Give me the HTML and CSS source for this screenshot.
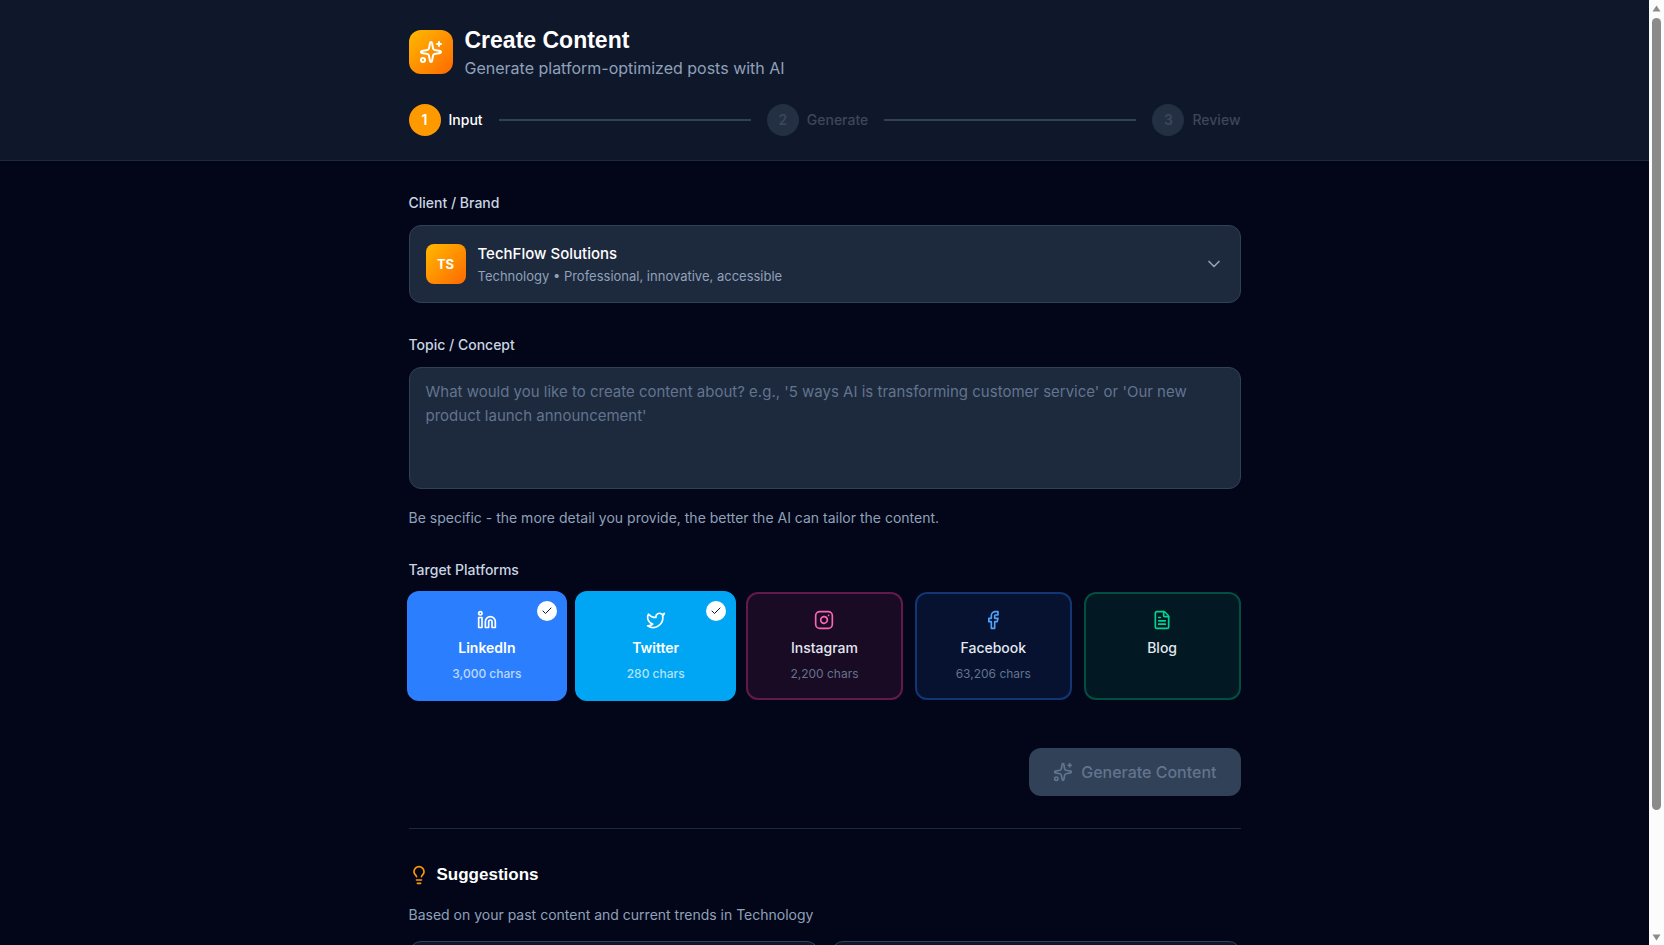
FILE: index.html
```
<!DOCTYPE html>
<html lang="en">
<head>
<meta charset="utf-8">
<meta name="viewport" content="width=device-width, initial-scale=1">
<title>Create Content</title>
<link rel="stylesheet" href="styles.css">
</head>

<body>
<div class="page">

<header class="header">
<div class="container">
	<div class="title-row">
		<div class="logo">
			<svg class="icon icon-lg" viewBox="0 0 24 24"><path d="M11.017 2.814a1 1 0 0 1 1.966 0l1.051 5.558a2 2 0 0 0 1.594 1.594l5.558 1.051a1 1 0 0 1 0 1.966l-5.558 1.051a2 2 0 0 0-1.594 1.594l-1.051 5.558a1 1 0 0 1-1.966 0l-1.051-5.558a2 2 0 0 0-1.594-1.594l-5.558-1.051a1 1 0 0 1 0-1.966l5.558-1.051a2 2 0 0 0 1.594-1.594z"/><path d="M20 2v4"/><path d="M22 4h-4"/><circle cx="4" cy="20" r="2"/></svg>
		</div>
		<div>
			<h1>Create Content</h1>
			<p class="subtitle">Generate platform-optimized posts with AI</p>
		</div>
	</div>
	<ol class="steps">
		<li class="step active"><span class="step-num">1</span><span>Input</span></li>
		<li class="step-line" aria-hidden="true"></li>
		<li class="step"><span class="step-num">2</span><span>Generate</span></li>
		<li class="step-line" aria-hidden="true"></li>
		<li class="step"><span class="step-num">3</span><span>Review</span></li>
	</ol>
</div>
</header>

<main class="container main">
<form>
	<div class="field">
		<label class="label" for="client">Client / Brand</label>
		<button type="button" class="client" id="client" aria-haspopup="listbox">
			<span class="avatar">TS</span>
			<span class="client-text">
				<span class="client-name">TechFlow Solutions</span>
				<span class="client-meta">Technology &bull; Professional, innovative, accessible</span>
			</span>
			<svg class="icon" viewBox="0 0 24 24"><path d="m6 9 6 6 6-6"/></svg>
		</button>
	</div>

	<div class="field">
		<label class="label" for="topic">Topic / Concept</label>
		<textarea class="topic" id="topic" placeholder="What would you like to create content about? e.g., '5 ways AI is transforming customer service' or 'Our new product launch announcement'"></textarea>
		<p class="hint">Be specific - the more detail you provide, the better the AI can tailor the content.</p>
	</div>

	<div class="field" role="group" aria-labelledby="platforms-label">
		<div class="label" id="platforms-label">Target Platforms</div>
		<div class="platforms">
			<button type="button" class="platform linkedin selected" aria-pressed="true">
				<span class="badge"><svg class="icon icon-xs" viewBox="0 0 24 24"><path d="M20 6 9 17l-5-5"/></svg></span>
				<svg class="icon" viewBox="0 0 24 24"><path d="M16 8a6 6 0 0 1 6 6v7h-4v-7a2 2 0 0 0-2-2 2 2 0 0 0-2 2v7h-4v-7a6 6 0 0 1 6-6z"/><rect width="4" height="12" x="2" y="9"/><circle cx="4" cy="4" r="2"/></svg>
				<span class="name">LinkedIn</span>
				<span class="chars">3,000 chars</span>
			</button>
			<button type="button" class="platform twitter selected" aria-pressed="true">
				<span class="badge"><svg class="icon icon-xs" viewBox="0 0 24 24"><path d="M20 6 9 17l-5-5"/></svg></span>
				<svg class="icon" viewBox="0 0 24 24"><path d="M22 4s-.7 2.1-2 3.4c1.6 10-9.4 17.3-18 11.6 2.2.1 4.4-.6 6-2C3 15.5.5 9.6 3 5c2.2 2.6 5.6 4.1 9 4-.9-4.2 4-6.6 7-3.8 1.1 0 3-1.2 3-1.2z"/></svg>
				<span class="name">Twitter</span>
				<span class="chars">280 chars</span>
			</button>
			<button type="button" class="platform instagram" aria-pressed="false">
				<svg class="icon" viewBox="0 0 24 24"><rect width="20" height="20" x="2" y="2" rx="5" ry="5"/><path d="M16 11.37A4 4 0 1 1 12.63 8 4 4 0 0 1 16 11.37z"/><path d="M17.5 6.5h.01"/></svg>
				<span class="name">Instagram</span>
				<span class="chars">2,200 chars</span>
			</button>
			<button type="button" class="platform facebook" aria-pressed="false">
				<svg class="icon" viewBox="0 0 24 24"><path d="M18 2h-3a5 5 0 0 0-5 5v3H7v4h3v8h4v-8h3l1-4h-4V7a1 1 0 0 1 1-1h3z"/></svg>
				<span class="name">Facebook</span>
				<span class="chars">63,206 chars</span>
			</button>
			<button type="button" class="platform blog" aria-pressed="false">
				<svg class="icon" viewBox="0 0 24 24"><path d="M6 22a2 2 0 0 1-2-2V4a2 2 0 0 1 2-2h8a2.4 2.4 0 0 1 1.704.706l3.588 3.588A2.4 2.4 0 0 1 20 8v12a2 2 0 0 1-2 2z"/><path d="M14 2v5a1 1 0 0 0 1 1h5"/><path d="M10 9H8"/><path d="M16 13H8"/><path d="M16 17H8"/></svg>
				<span class="name">Blog</span>
			</button>
		</div>
	</div>

	<div class="actions">
		<button type="submit" class="generate" disabled>
			<svg class="icon" viewBox="0 0 24 24"><path d="M11.017 2.814a1 1 0 0 1 1.966 0l1.051 5.558a2 2 0 0 0 1.594 1.594l5.558 1.051a1 1 0 0 1 0 1.966l-5.558 1.051a2 2 0 0 0-1.594 1.594l-1.051 5.558a1 1 0 0 1-1.966 0l-1.051-5.558a2 2 0 0 0-1.594-1.594l-5.558-1.051a1 1 0 0 1 0-1.966l5.558-1.051a2 2 0 0 0 1.594-1.594z"/><path d="M20 2v4"/><path d="M22 4h-4"/><circle cx="4" cy="20" r="2"/></svg>
			Generate Content
		</button>
	</div>
</form>

<section class="suggestions">
	<div class="suggest-title">
		<svg class="icon" viewBox="0 0 24 24"><path d="M15 14c.2-1 .7-1.7 1.5-2.5 1-.9 1.5-2.2 1.5-3.5A6 6 0 0 0 6 8c0 1 .2 2.2 1.5 3.5.7.7 1.3 1.5 1.5 2.5"/><path d="M9 18h6"/><path d="M10 22h4"/></svg>
		<h2>Suggestions</h2>
	</div>
	<p class="suggest-sub">Based on your past content and current trends in Technology</p>
	<div class="suggest-grid">
		<div class="suggest-card"></div>
		<div class="suggest-card"></div>
	</div>
</section>
</main>
</div>

<div class="scrollbar" aria-hidden="true">
	<svg class="arrow" viewBox="0 0 9 7"><path d="M4.5 0.5 8.5 6.5h-8z"/></svg>
	<div class="track"><div class="thumb"></div></div>
	<svg class="arrow" viewBox="0 0 9 7"><path d="M4.5 6.5 8.5 0.5h-8z"/></svg>
</div>
</body>
</html>
```
FILE: styles.css
```
*
{
	box-sizing:border-box;
	margin:0;
	padding:0;
}
body
{
	display:flex;
	height:100vh;
	overflow:hidden;
	background:#020618;
	color:#fff;
	font-family:Inter, "Open Sans", sans-serif;
	font-size:16px;
	line-height:24px;
}
button, textarea
{
	font:inherit;
	color:inherit;
}
.page
{
	flex:1;
	min-width:0;
	overflow:hidden;
}
.container
{
	max-width:896px;
	margin:0 auto;
	padding:0 32px;
}
.icon
{
	width:20px;
	height:20px;
	flex:none;
	fill:none;
	stroke:currentColor;
	stroke-width:2;
	stroke-linecap:round;
	stroke-linejoin:round;
}
.icon-lg
{
	width:24px;
	height:24px;
}
.icon-xs
{
	width:12px;
	height:12px;
}

/* header */
.header
{
	padding:24px 0;
	background:#0f172b;
	border-bottom:1px solid #1d293d;
}
.title-row
{
	display:flex;
	align-items:center;
	gap:12px;
	margin-bottom:24px;
}
.logo
{
	display:flex;
	align-items:center;
	justify-content:center;
	width:44px;
	height:44px;
	border-radius:12px;
	background:linear-gradient(135deg, #ffb900, #ff6900);
}
h1, h2
{
	font-family:Arial, "Liberation Sans", sans-serif;
	font-weight:bold;
}
h1
{
	font-size:23px;
	line-height:32px;
}
.subtitle
{
	color:#90a1b9;
}
.steps
{
	display:flex;
	align-items:center;
	gap:16px;
	list-style:none;
}
.step
{
	display:flex;
	align-items:center;
	gap:8px;
	font-size:14px;
	line-height:20px;
	font-weight:500;
	color:#3b475b;
}
.step-num
{
	display:flex;
	align-items:center;
	justify-content:center;
	width:32px;
	height:32px;
	border-radius:50%;
	background:#232f43;
	font-weight:600;
}
.active
{
	color:#fff;
}
.active .step-num
{
	background:#fe9a00;
}
.step-line
{
	flex:1;
	height:2px;
	background:#314158;
}

/* form */
.main
{
	padding-top:32px;
}
.field
{
	margin-bottom:32px;
}
.label
{
	display:block;
	margin-bottom:12px;
	font-size:14px;
	line-height:20px;
	font-weight:500;
	color:#cad5e2;
}
.client
{
	display:flex;
	align-items:center;
	gap:12px;
	width:100%;
	padding:16px;
	border:1px solid #314158;
	border-radius:12px;
	background:#1d293d;
	color:#90a1b9;
	text-align:left;
}
.avatar
{
	display:flex;
	align-items:center;
	justify-content:center;
	width:40px;
	height:40px;
	border-radius:8px;
	background:linear-gradient(135deg, #ffb900, #ff6900);
	color:#fff;
	font-size:13px;
	font-weight:700;
}
.client-text
{
	display:flex;
	flex-direction:column;
	flex:1;
}
.client-name
{
	font-size:15px;
	font-weight:500;
	color:#fff;
}
.client-meta
{
	font-size:13px;
	line-height:20px;
}
.topic
{
	display:block;
	width:100%;
	height:122px;
	padding:12px 16px;
	border:1px solid #314158;
	border-radius:12px;
	background:#1d293d;
	font-size:15px;
	resize:none;
}
.topic::placeholder
{
	color:#62748e;
}
.hint
{
	margin-top:19px;
	font-size:14px;
	line-height:20px;
	color:#90a1b9;
}

/* platforms */
.platforms
{
	display:grid;
	grid-template-columns:repeat(5, 1fr);
	gap:12px;
}
.platform
{
	position:relative;
	display:flex;
	flex-direction:column;
	align-items:center;
	gap:8px;
	padding:16px;
	border:2px solid;
	border-radius:12px;
}
.name
{
	font-size:14px;
	line-height:20px;
	font-weight:500;
	color:#e2e8f0;
}
.chars
{
	font-size:12px;
	line-height:16px;
	color:#62748e;
}
.selected
{
	margin:-1px -2px;
	padding:17px 16px;
	color:#fff;
}
.selected .name
{
	font-weight:600;
	color:#fff;
}
.selected .chars
{
	font-weight:500;
	color:rgba(255,255,255,0.7);
}
.badge
{
	position:absolute;
	top:8px;
	right:8px;
	display:flex;
	align-items:center;
	justify-content:center;
	width:20px;
	height:20px;
	border-radius:50%;
	background:#fff;
	color:#0f172b;
}
.linkedin
{
	background:#2b7fff;
	border-color:#2b7fff;
}
.twitter
{
	background:#00a6f4;
	border-color:#00a6f4;
}
.instagram
{
	background:#1a0b25;
	border-color:#64194c;
	color:#fb64b6;
}
.facebook
{
	background:#06122f;
	border-color:#123674;
	color:#51a2ff;
}
.blog
{
	background:#021822;
	border-color:#014f40;
	color:#00d492;
}

.actions
{
	display:flex;
	justify-content:flex-end;
	padding-top:16px;
}
.generate
{
	display:flex;
	align-items:center;
	gap:8px;
	padding:12px 24px;
	border:none;
	border-radius:12px;
	background:#314158;
	color:#62748e;
	font-weight:500;
}

/* suggestions */
.suggestions
{
	margin-top:32px;
	padding-top:32px;
	border-top:1px solid #1d293d;
}
.suggest-title
{
	display:flex;
	align-items:center;
	gap:8px;
	margin-bottom:16px;
	color:#fe9a00;
}
h2
{
	font-size:17px;
	line-height:28px;
	color:#fff;
}
.suggest-sub
{
	margin-bottom:16px;
	font-size:14px;
	line-height:20px;
	color:#90a1b9;
}
.suggest-grid
{
	display:grid;
	grid-template-columns:repeat(2, 1fr);
	gap:12px;
}
.suggest-card
{
	height:120px;
	border:1px solid #314158;
	border-radius:12px;
	background:#0f172b;
}

/* scrollbar */
.scrollbar
{
	display:flex;
	flex-direction:column;
	align-items:center;
	gap:6px;
	width:15px;
	padding:5px 0 4px;
	background:#fcfcfc;
}
.arrow
{
	width:9px;
	height:7px;
	flex:none;
	fill:#8b8b8b;
}
.track
{
	flex:1;
	width:9px;
}
.thumb
{
	height:87%;
	border-radius:5px;
	background:#8b8b8b;
}
```
